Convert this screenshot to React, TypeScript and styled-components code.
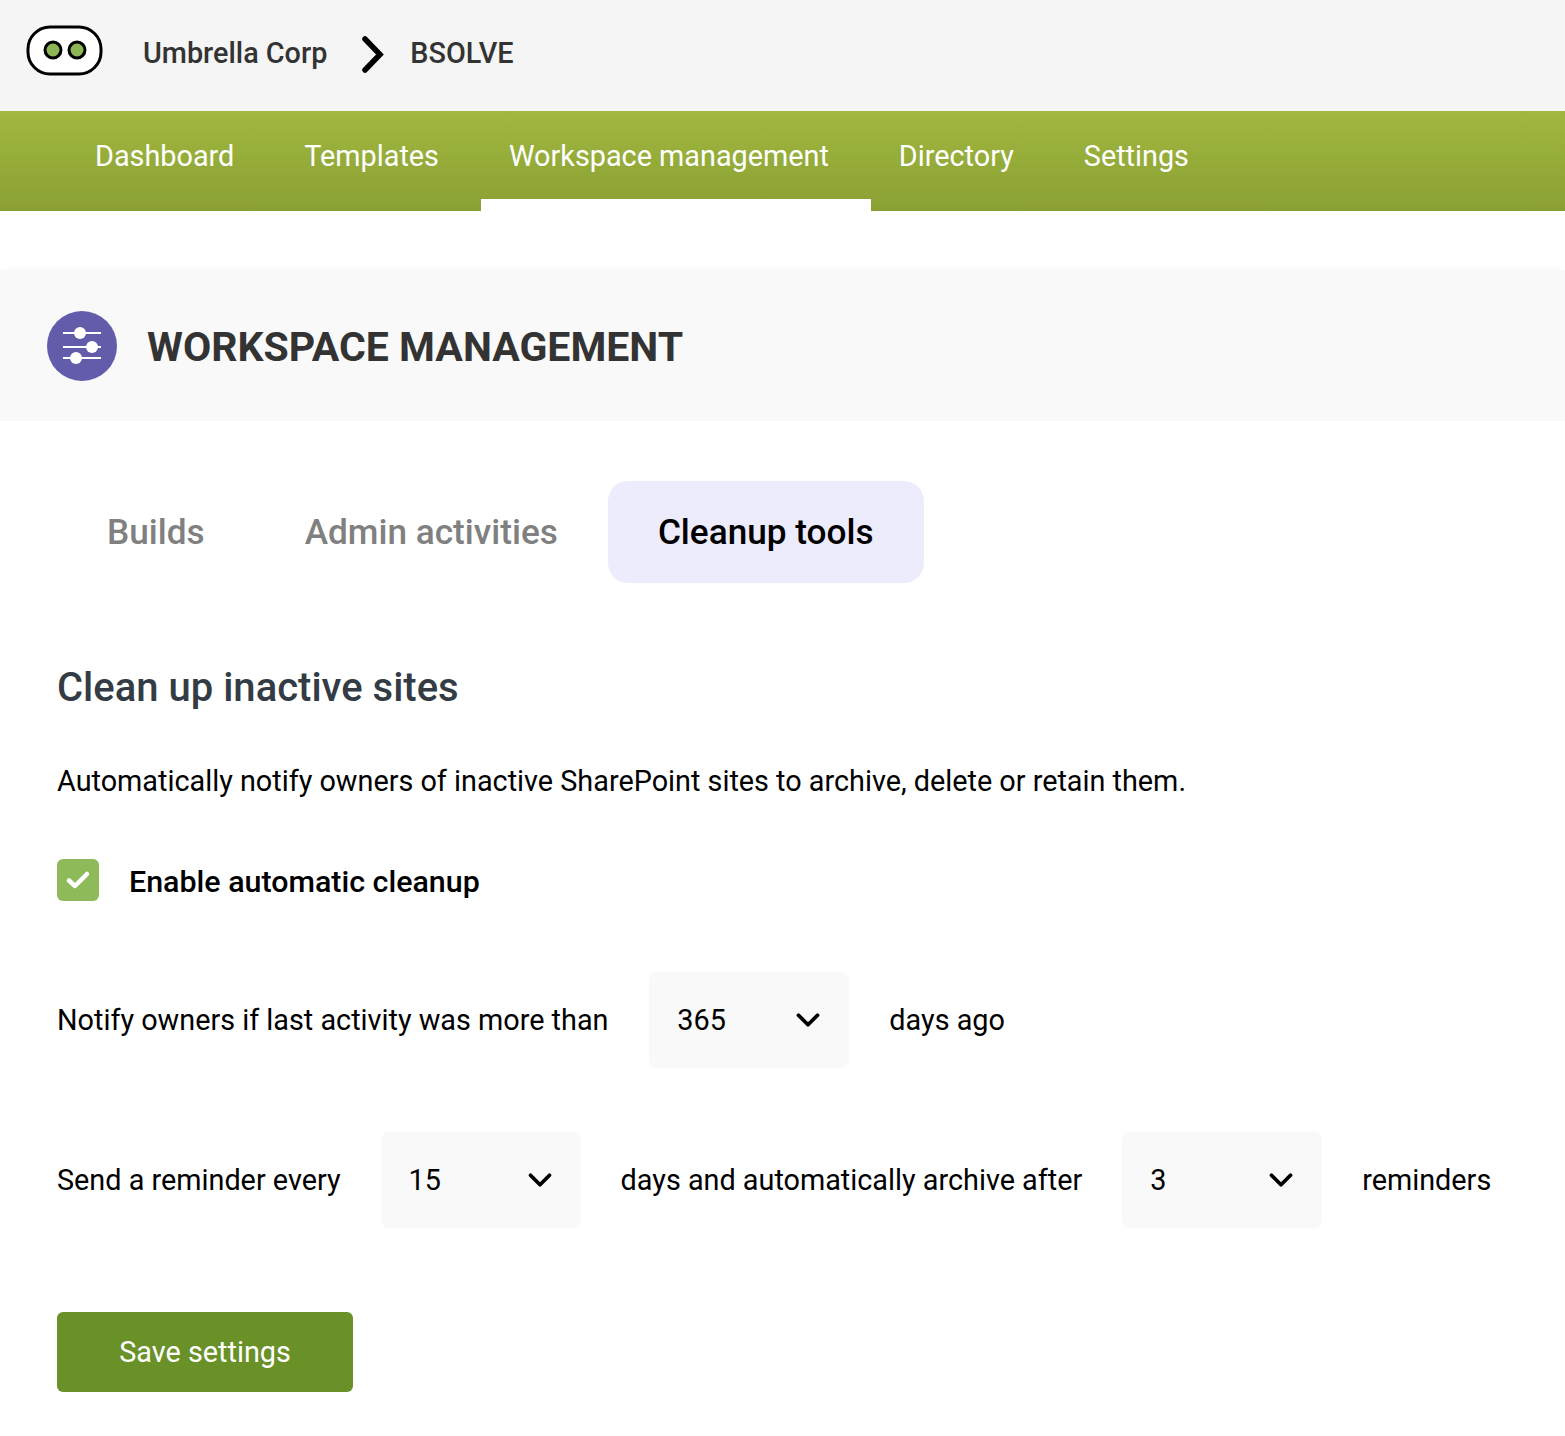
import React from 'react';
import styled, { createGlobalStyle } from 'styled-components';
import { ChevronDown } from 'lucide-react';

const GlobalStyle = createGlobalStyle`
  html, body {
    margin: 0;
    padding: 0;
    background: #fff;
    font-family: Roboto, "Liberation Sans", sans-serif;
  }
  * {
    box-sizing: border-box;
  }
`;

const navItems = ['Dashboard', 'Templates', 'Workspace management', 'Directory', 'Settings'];
const tabs = ['Builds', 'Admin activities', 'Cleanup tools'];

const Logo = () => (
  <svg width="77" height="52" viewBox="0 0 77 52">
    <rect x="2" y="2" width="73" height="47" rx="22" fill="#fff" stroke="#000" strokeWidth="3" />
    <circle cx="27" cy="25" r="8" fill="#8db654" stroke="#000" strokeWidth="3" />
    <circle cx="51" cy="25" r="8" fill="#8db654" stroke="#000" strokeWidth="3" />
  </svg>
);

const CrumbChevron = () => (
  <svg width="24" height="38" viewBox="0 0 24 38">
    <path d="M4 4 19 19.5 4 35" fill="none" stroke="#000" strokeWidth="5.5" strokeLinecap="round" strokeLinejoin="miter" />
  </svg>
);

const SlidersIcon = () => (
  <svg width="40" height="40" viewBox="0 0 40 40">
    <g stroke="#fff" strokeWidth="2" fill="none">
      <path d="M1 7h38" />
      <path d="M1 21h38" />
      <path d="M1 32h38" />
    </g>
    <g fill="#fff">
      <circle cx="18" cy="7" r="6" />
      <circle cx="30" cy="21" r="6" />
      <circle cx="14" cy="32" r="6" />
    </g>
  </svg>
);

const Dropdown: React.FC<{ value: string }> = ({ value }) => (
  <Select>
    <span>{value}</span>
    <ChevronDown size={38} strokeWidth={2.4} color="#000" />
  </Select>
);

const App: React.FC = () => (
  <Page>
    <GlobalStyle />
    <TopBar>
      <Logo />
      <Crumb>Umbrella Corp</Crumb>
      <CrumbArrow>
        <CrumbChevron />
      </CrumbArrow>
      <Crumb>BSOLVE</Crumb>
    </TopBar>
    <Nav>
      {navItems.map((item) => (
        <NavItem key={item} $active={item === 'Workspace management'}>
          {item}
        </NavItem>
      ))}
    </Nav>
    <PageHeader>
      <IconCircle>
        <SlidersIcon />
      </IconCircle>
      <PageTitle>WORKSPACE MANAGEMENT</PageTitle>
    </PageHeader>
    <Content>
      <Tabs>
        {tabs.map((tab) => (
          <Tab key={tab} $active={tab === 'Cleanup tools'}>
            {tab}
          </Tab>
        ))}
      </Tabs>
      <SectionTitle>Clean up inactive sites</SectionTitle>
      <Description>
        Automatically notify owners of inactive SharePoint sites to archive, delete or retain them.
      </Description>
      <CheckRow>
        <CheckBox>
          <svg width="26" height="22" viewBox="0 0 26 22">
            <path d="M4 11.5 10 17 22 5" fill="none" stroke="#fff" strokeWidth="4.5" strokeLinecap="round" strokeLinejoin="round" />
          </svg>
        </CheckBox>
        <CheckLabel>Enable automatic cleanup</CheckLabel>
      </CheckRow>
      <FormRow>
        <LeadLabel>Notify owners if last activity was more than</LeadLabel>
        <Dropdown value="365" />
        <span>days ago</span>
      </FormRow>
      <FormRow>
        <span>Send a reminder every</span>
        <Dropdown value="15" />
        <span>days and automatically archive after</span>
        <Dropdown value="3" />
        <span>reminders</span>
      </FormRow>
      <SaveButton>Save settings</SaveButton>
    </Content>
  </Page>
);

export default App;

// Styled Components
const Page = styled.div`
  min-height: 1436px;
  background: #fff;
`;

const TopBar = styled.header`
  display: flex;
  align-items: center;
  height: 111px;
  padding: 0 0 10px 26px;
  background: #f5f5f5;
`;

const Crumb = styled.span`
  margin: 5px 0 0 40px;
  font-size: 28.8px;
  font-weight: 500;
  color: #333;
`;

const CrumbArrow = styled.span`
  display: flex;
  margin: 6px -15px 0 34px;
`;

const Nav = styled.nav`
  display: flex;
  align-items: stretch;
  height: 100px;
  padding-left: 67px;
  background: linear-gradient(180deg, #a0b83f 0%, #8aa034 100%);
`;

const NavItem = styled.a<{ $active?: boolean }>`
  display: block;
  padding: 26px 42px 0 28px;
  font-size: 28.8px;
  line-height: 38px;
  color: #fff;
  border-bottom: 12px solid ${(p) => (p.$active ? '#fff' : 'transparent')};
`;

const PageHeader = styled.div`
  display: flex;
  align-items: center;
  gap: 30px;
  height: 151px;
  margin-top: 59px;
  padding-left: 47px;
  background: #f9f9f9;
  box-shadow: 0 -3px 6px rgba(0, 0, 0, 0.015);
`;

const IconCircle = styled.div`
  display: flex;
  align-items: center;
  justify-content: center;
  width: 70px;
  height: 70px;
  border-radius: 50%;
  background: #635cab;
`;

const PageTitle = styled.h1`
  margin: 2px 0 0;
  font-size: 41px;
  font-weight: 700;
  color: #333;
`;

const Content = styled.main`
  padding: 60px 0 0 57px;
`;

const Tabs = styled.div`
  display: flex;
  height: 102px;
`;

const Tab = styled.div<{ $active?: boolean }>`
  display: flex;
  align-items: center;
  padding: 0 50px;
  border-radius: 20px;
  font-size: 35.2px;
  font-weight: 500;
  color: ${(p) => (p.$active ? '#000' : '#808080')};
  background: ${(p) => (p.$active ? '#edecfc' : 'transparent')};
`;

const SectionTitle = styled.h2`
  margin: 81px 0 0;
  font-size: 40px;
  line-height: 48px;
  font-weight: 500;
  color: #333c44;
`;

const Description = styled.p`
  margin: 49px 0 0;
  font-size: 28.8px;
  line-height: 40px;
  color: #000;
`;

const CheckRow = styled.div`
  display: flex;
  align-items: center;
  gap: 30px;
  margin-top: 58px;
`;

const CheckBox = styled.div`
  display: flex;
  align-items: center;
  justify-content: center;
  width: 42px;
  height: 42px;
  border-radius: 6px;
  background: #8fba5a;
`;

const CheckLabel = styled.span`
  padding-top: 2px;
  font-size: 30.4px;
  font-weight: 500;
  color: #000;
`;

const FormRow = styled.div`
  display: flex;
  align-items: center;
  gap: 40px;
  margin-top: 71px;
  font-size: 28.8px;
  color: #000;

  & + & {
    margin-top: 64px;
  }
`;

const LeadLabel = styled.span`
  margin-right: 0.9px;
`;

const Select = styled.div`
  display: flex;
  align-items: center;
  justify-content: space-between;
  width: 200px;
  height: 96px;
  padding: 0 22px 0 28px;
  border-radius: 8px;
  background: #f9f9f9;
`;

const SaveButton = styled.button`
  display: block;
  width: 296px;
  height: 80px;
  margin-top: 84px;
  border: 0;
  border-radius: 6px;
  background: #6a9128;
  font-family: inherit;
  font-size: 28.8px;
  color: #fff;
`;
